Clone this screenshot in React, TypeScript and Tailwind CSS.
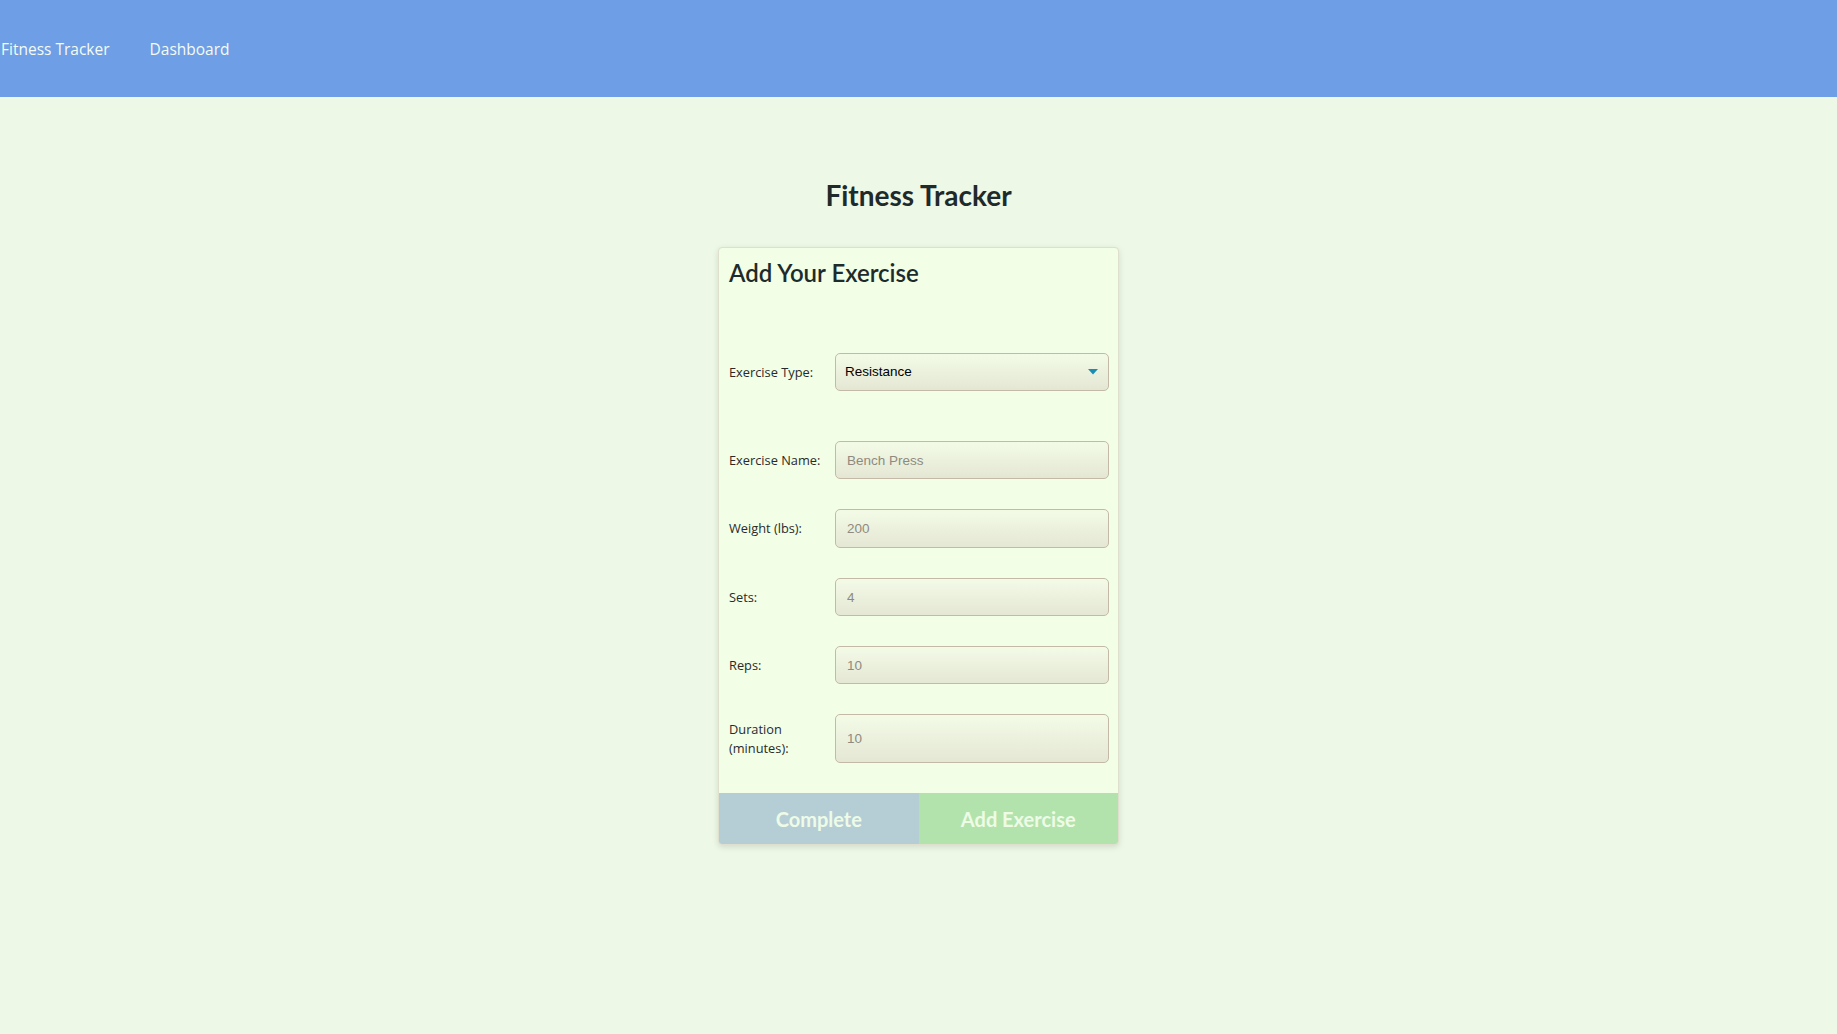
import React from "react";

const labelCls =
  "w-[106px] shrink-0 text-[12.8px] leading-[19px] text-[#2a2a2a] [font-family:'Open_Sans',sans-serif]";
const inputCls =
  "flex-1 min-w-0 rounded-[5px] border border-[#c4b9a6] bg-gradient-to-b from-[#f3fbe7] to-[#e4e7d4] px-[11px] text-[13.5px] text-[#333] placeholder:text-[#8f8a80] outline-none [font-family:'Liberation_Sans',Arial,sans-serif]";

function Row({
  label,
  placeholder,
  h = "h-[38px]",
  mt,
}: {
  label: React.ReactNode;
  placeholder: string;
  h?: string;
  mt: string;
}) {
  return (
    <div className={`flex items-center ${mt}`}>
      <label className={labelCls}>{label}</label>
      <input className={`${inputCls} ${h}`} placeholder={placeholder} />
    </div>
  );
}

export default function App() {
  return (
    <div className="min-h-[1034px] bg-[#edf8e7] [font-family:'Lato',sans-serif]">
      <header className="h-[97px] bg-[#6d9ee6] flex items-center pl-[1px] pt-[2px] gap-[40px] text-[15.5px] text-[#f4fbf2] [font-family:'Open_Sans',sans-serif]">
        <span>Fitness Tracker</span>
        <span>Dashboard</span>
      </header>
      <main className="flex flex-col items-center">
        <h1 className="mt-[81px] text-[28px] leading-[34px] font-bold text-[#1f2a2a]">
          Fitness Tracker
        </h1>
        <div className="mt-[35px] w-[401px] rounded-[4px] border border-[#dedfcc] bg-[#f2fee6] shadow-[0_2px_6px_rgba(0,0,0,0.12)] overflow-hidden">
          <div className="pt-[10px] pl-[10px] pr-[9px]">
            <h2 className="text-[24px] leading-[29px] font-semibold text-[#1f2a2a]">
              Add Your Exercise
            </h2>
            <div className="flex items-center mt-[66px]">
              <label className={labelCls}>Exercise Type:</label>
              <div className="relative flex-1 h-[38px] rounded-[5px] border border-[#c4b9a6] bg-gradient-to-b from-[#f3fbe7] to-[#e4e7d4] flex items-center px-[9px] text-[13.5px] text-black [font-family:'Liberation_Sans',Arial,sans-serif]">
                <span>Resistance</span>
                <svg
                  className="absolute right-[10px] top-[15px]"
                  width="10"
                  height="6"
                  viewBox="0 0 10 6"
                >
                  <polygon points="0,0 10,0 5,5.5" fill="#1a8db5" />
                </svg>
              </div>
            </div>
            <Row mt="mt-[50px]" label="Exercise Name:" placeholder="Bench Press" />
            <Row mt="mt-[30px]" h="h-[39px]" label="Weight (lbs):" placeholder="200" />
            <Row mt="mt-[30px]" label="Sets:" placeholder="4" />
            <Row mt="mt-[30px]" label="Reps:" placeholder="10" />
            <Row
              mt="mt-[30px]"
              h="h-[49px]"
              label={
                <>
                  Duration
                  <br />
                  (minutes):
                </>
              }
              placeholder="10"
            />
          </div>
          <div className="mt-[30px] flex h-[51px] text-[20px] font-bold text-[#eefbe6]">
            <button className="flex-1 bg-[#b5ced6]">Complete</button>
            <button className="flex-1 bg-[#b3e3ac]">Add Exercise</button>
          </div>
        </div>
      </main>
    </div>
  );
}
